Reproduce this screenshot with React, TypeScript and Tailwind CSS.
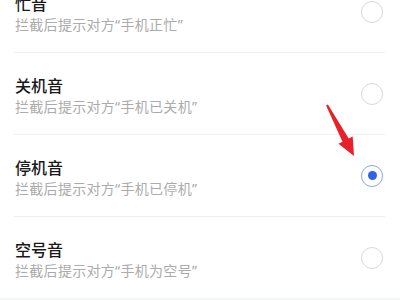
import React from "react";

interface OptionRowProps {
  title: string;
  target: string;
  checked?: boolean;
}

function Radio({ checked }: { checked?: boolean }) {
  if (checked) {
    return (
      <div className="w-[22px] h-[22px] rounded-full border-[1.5px] border-[#8aa6ee] flex items-center justify-center">
        <div className="w-[9px] h-[9px] rounded-full bg-[#2f62e6]" />
      </div>
    );
  }
  return <div className="w-[22px] h-[22px] rounded-full border-[1.5px] border-[#d9d9d9]" />;
}

const quoteFont = { fontFamily: '"Noto Sans", sans-serif' };

function OptionRow({ title, target, checked }: OptionRowProps) {
  return (
    <div className="h-[81px] flex items-center justify-between pl-[15px] pr-[17px]">
      <div className="flex flex-col pt-[4px]">
        <span className="text-[16px] leading-[22px] text-[#1a1a1a] font-medium">{title}</span>
        <span className="text-[14px] leading-[20px] text-[#ababab] tracking-[0.3px]">
          拦截后提示对方<span style={quoteFont}>{"\u201c"}</span>
          {target}
          <span style={quoteFont}>{"\u201d"}</span>
        </span>
      </div>
      <Radio checked={checked} />
    </div>
  );
}

const options = [
  { title: "忙音", target: "手机正忙" },
  { title: "关机音", target: "手机已关机" },
  { title: "停机音", target: "手机已停机", checked: true },
  { title: "空号音", target: "手机为空号" },
];

export default function App() {
  return (
    <div
      className="relative w-[400px] h-[300px] overflow-hidden bg-white"
      style={{ fontFamily: '"Noto Sans CJK SC", "Noto Sans", sans-serif' }}
    >
      <div className="-mt-[29px] flex flex-col">
        {options.map((o, i) => (
          <React.Fragment key={o.title}>
            {i > 0 && <div className="h-px ml-[14px] mr-[15px] bg-[#f0f0f0]" />}
            <OptionRow title={o.title} target={o.target} checked={o.checked} />
          </React.Fragment>
        ))}
        <div className="h-[10px] bg-[#f4f5f9]" />
      </div>
      <svg className="absolute left-0 top-0" width="400" height="300" viewBox="0 0 400 300">
        <polygon
          points="327.9,104.5 348.7,138.5 352.7,136.4 354,156 338.5,143.8 342.5,141.7 326.1,105.5"
          fill="#e8202a"
        />
      </svg>
    </div>
  );
}
